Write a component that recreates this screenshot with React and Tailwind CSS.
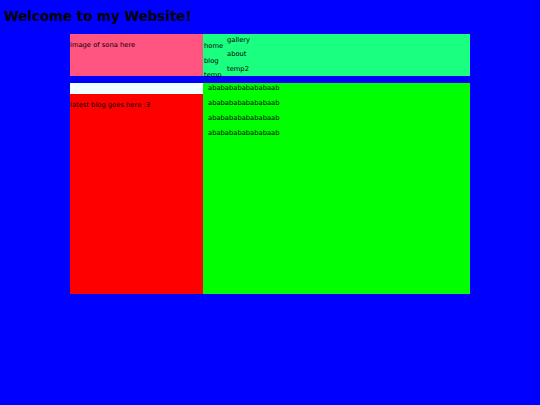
const leftNav = ['home', 'blog', 'temp'];
const rightNav = ['gallery', 'about', 'temp2'];
const posts = [1, 2, 3, 4];

export default function App() {
  return (
    <div
      className="min-h-[405px] w-full bg-[#0000ff] text-black"
      style={{ fontFamily: '"DejaVu Sans", sans-serif' }}
    >
      <h1 className="pl-[4px] pt-[9px] text-[13.4px] font-bold leading-[16px]">
        Welcome to my Website!
      </h1>

      <div className="mx-auto mt-[9px] w-[400px] text-[6.75px] leading-[8px]">
        {/* header row */}
        <div className="flex h-[42px]">
          <div className="w-[133px] bg-[#ff5580] pt-[7px]">
            <p>image of sona here</p>
          </div>
          <div className="flex flex-1 bg-[#1aff80]">
            <ul className="flex w-[24px] flex-col gap-[6.5px] pl-[1px] pt-[8px]">
              {leftNav.map((item) => (
                <li key={item}>{item}</li>
              ))}
            </ul>
            <ul className="flex flex-col gap-[6.5px] pt-[1.5px]">
              {rightNav.map((item) => (
                <li key={item}>{item}</li>
              ))}
            </ul>
          </div>
        </div>

        {/* content row */}
        <div className="mt-[7px] flex h-[211px]">
          <div className="flex w-[133px] flex-col">
            <div className="h-[11px] bg-[#f0ffff]" />
            <div className="flex-1 bg-[#ff0000] pt-[7px]">
              <p>latest blog goes here :3</p>
            </div>
          </div>
          <div className="flex flex-1 flex-col gap-[7px] bg-[#00ff00] pl-[5px] pt-[0.5px]">
            {posts.map((n) => (
              <p key={n}>abababababababaab</p>
            ))}
          </div>
        </div>
      </div>
    </div>
  );
}
